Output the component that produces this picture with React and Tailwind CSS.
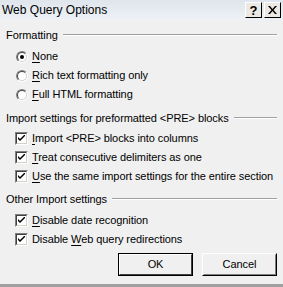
import React from "react";

const U = ({ children }) => <span className="underline underline-offset-[2px]">{children}</span>;

const GroupHeader = ({ label, className }) => (
  <div className={"flex items-center h-[16px] whitespace-nowrap " + className}>
    <span className="pr-[5px]">{label}</span>
    <div className="flex-1 h-[2px] border-t border-[#a0a0a0] border-b border-b-white mr-[6px]" />
  </div>
);

const Radio = ({ checked, children }) => (
  <div className="flex items-center h-[19px] pl-[10px] whitespace-nowrap">
    <div className="w-[12px] h-[12px] rounded-full border border-t-[#808080] border-l-[#808080] border-r-white border-b-white flex">
      <div className="flex-1 rounded-full border border-t-[#404040] border-l-[#404040] border-r-[#d4d0c8] border-b-[#d4d0c8] bg-white flex items-center justify-center">
        {checked && <div className="w-[4px] h-[4px] rounded-full bg-black" />}
      </div>
    </div>
    <span className="ml-[4px]">{children}</span>
  </div>
);

const Check = ({ children }) => (
  <div className="flex items-center h-[19px] pl-[9px] whitespace-nowrap">
    <div className="w-[13px] h-[13px] shrink-0 border border-t-[#808080] border-l-[#808080] border-r-white border-b-white flex">
      <div className="flex-1 border border-t-[#404040] border-l-[#404040] border-r-[#d4d0c8] border-b-[#d4d0c8] bg-white flex items-center justify-center">
        <svg width="7" height="7" viewBox="0 0 7 7">
          <path d="M0 2 L0 4 L2 6 L7 1 L7 -1 L2 4 Z" fill="#000" />
        </svg>
      </div>
    </div>
    <span className="ml-[4px]">{children}</span>
  </div>
);

const TitleBtn = ({ children }) => (
  <div className="w-[17px] h-[16px] bg-[#ece9e4] border border-t-white border-l-white border-r-black border-b-black flex items-center justify-center font-bold text-[13px] leading-none">
    {children}
  </div>
);

export default function App() {
  return (
    <div
      className="w-[283px] h-[287px] bg-[#f0f0f0] text-[11px] tracking-[-0.08px] text-black flex flex-col border-b-[3px] border-[#a0a0a0] overflow-hidden"
      style={{ fontFamily: '"Liberation Sans", Arial, sans-serif' }}
    >
      <div className="h-[20px] flex items-center justify-between pl-[2px] pr-[2px] bg-gradient-to-b from-[#dfe5ec] to-[#eef2f6]">
        <span className="text-[12px] tracking-normal">Web Query Options</span>
        <div className="flex gap-[2px]">
          <TitleBtn>?</TitleBtn>
          <TitleBtn>
            <svg width="9" height="8" viewBox="0 0 9 8">
              <path d="M0 0 L2 0 L4.5 3 L7 0 L9 0 L5.5 4 L9 8 L7 8 L4.5 5 L2 8 L0 8 L3.5 4 Z" fill="#000" />
            </svg>
          </TitleBtn>
        </div>
      </div>
      <div className="pl-[6px] flex flex-col">
        <GroupHeader label="Formatting" className="mt-[7px]" />
        <div className="mt-[4px]">
          <Radio checked><U>N</U>one</Radio>
          <Radio><U>R</U>ich text formatting only</Radio>
          <Radio><U>F</U>ull HTML formatting</Radio>
        </div>
        <GroupHeader label="Import settings for preformatted <PRE> blocks" className="mt-[6px]" />
        <div className="mt-[3px]">
          <Check><U>I</U>mport &lt;PRE&gt; blocks into columns</Check>
          <Check><U>T</U>reat consecutive delimiters as one</Check>
          <Check><U>U</U>se the same import settings for the entire section</Check>
        </div>
        <GroupHeader label="Other Import settings" className="mt-[5px]" />
        <div className="mt-[4px]">
          <Check><U>D</U>isable date recognition</Check>
          <Check>Disable <U>W</U>eb query redirections</Check>
        </div>
        <div className="flex justify-end gap-[9px] mt-[4px] pr-[6px]">
          <div className="w-[75px] h-[23px] border border-black flex">
            <div className="flex-1 border border-t-white border-l-white border-r-[#404040] border-b-[#404040] bg-[#f0f0f0] flex items-center justify-center">
              OK
            </div>
          </div>
          <div className="w-[75px] h-[23px] border border-t-white border-l-white border-r-black border-b-black flex">
            <div className="flex-1 border border-t-[#f0f0f0] border-l-[#f0f0f0] border-r-[#808080] border-b-[#808080] flex items-center justify-center">
              Cancel
            </div>
          </div>
        </div>
      </div>
    </div>
  );
}
